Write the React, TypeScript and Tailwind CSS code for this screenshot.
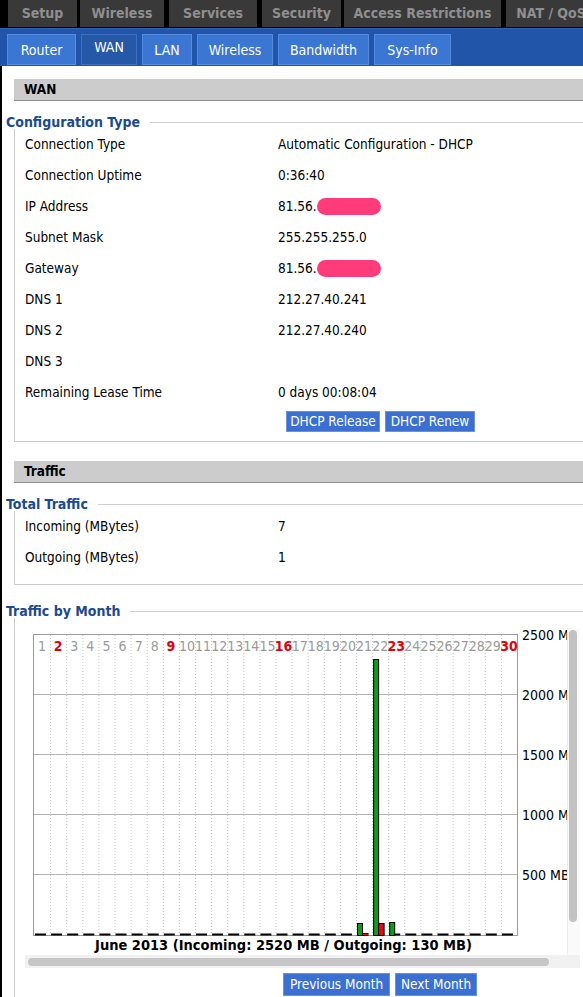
import React from "react";

const F = "font-['DejaVu_Sans_Condensed','DejaVu_Sans','Liberation_Sans',sans-serif]";
const FF = "'DejaVu Sans Condensed','DejaVu Sans','Liberation Sans',sans-serif";

const topTabs: { label: string; w: string; ml: string }[] = [
  { label: "Setup", w: "w-[69px]", ml: "ml-[8px]" },
  { label: "Wireless", w: "w-[84px]", ml: "ml-[3px]" },
  { label: "Services", w: "w-[88px]", ml: "ml-[5px]" },
  { label: "Security", w: "w-[79px]", ml: "ml-[5px]" },
  { label: "Access Restrictions", w: "w-[157px]", ml: "ml-[3px]" },
  { label: "NAT / QoS", w: "w-[90px]", ml: "ml-[5px]" },
];

const subTabs: { label: string; w: string; active?: boolean }[] = [
  { label: "Router", w: "w-[69px]" },
  { label: "WAN", w: "w-[56px]", active: true },
  { label: "LAN", w: "w-[50px]" },
  { label: "Wireless", w: "w-[76px]" },
  { label: "Bandwidth", w: "w-[91px]" },
  { label: "Sys-Info", w: "w-[77px]" },
];

function SectionBar({ title }: { title: string }) {
  return (
    <div className="ml-[12px] h-[22px] bg-[#cccccc] border-b border-[#8f8f8f] flex items-center pl-[10px]">
      <span className="text-[13.5px] font-bold text-[#000]">{title}</span>
    </div>
  );
}

function Legend({ title }: { title: string }) {
  return (
    <div className="flex items-center h-[14px]">
      <span className="ml-[4px] text-[14px] font-bold text-[#1b4a8f] leading-none whitespace-nowrap">{title}</span>
      <div className="flex-1 h-px bg-[#cfcfcf] ml-[10px]" />
    </div>
  );
}

function Blob() {
  return <span className="inline-block align-middle w-[64px] h-[17px] rounded-full bg-[#ff3b7c] -mt-[2px]" />;
}

function Row({ label, value }: { label: string; value: React.ReactNode }) {
  return (
    <div className="flex items-center h-[31px] text-[13.5px] text-[#000]">
      <div className="w-[253px] shrink-0">{label}</div>
      <div className="whitespace-nowrap">{value}</div>
    </div>
  );
}

function Btn({ label, w }: { label: string; w: string }) {
  return (
    <div className={`${w} h-full bg-[#3b6fd1] border border-[#6b93dc] text-white text-[13.5px] flex items-center justify-center whitespace-nowrap`}>
      {label}
    </div>
  );
}

const COL = 16.1;
const red = new Set([2, 9, 16, 23, 30]);
const bars: Record<number, [number, number]> = {
  21: [12, 2],
  22: [276, 12],
  23: [13, 0],
};

function Chart() {
  const days = Array.from({ length: 30 }, (_, i) => i + 1);
  const top = 6;
  const bottom = 307;
  return (
    <svg width={560} height={309} className="block ml-[8px]" style={{ overflow: "visible" }}>
      <rect x={0.5} y={top + 0.5} width={484} height={301} fill="#fff" stroke="#9a9a9a" />
      {days.slice(0, 29).map((d) => (
        <line
          key={"v" + d}
          x1={1 + d * COL + 0.5}
          x2={1 + d * COL + 0.5}
          y1={top + 1}
          y2={bottom}
          stroke="#c4c4c4"
          strokeDasharray="1,2"
        />
      ))}
      {[1, 2, 3, 4].map((k) => (
        <line key={"h" + k} x1={1} x2={484} y1={top + 60 * k + 0.5} y2={top + 60 * k + 0.5} stroke="#b3b3b3" />
      ))}
      {days.map((d) => {
        const x = 1 + (d - 1) * COL;
        const isRed = red.has(d);
        return (
          <text
            key={"t" + d}
            x={x + COL / 2}
            y={23}
            textAnchor="middle"
            fontSize={14}
            fontFamily={FF}
            fontWeight={isRed ? 700 : 400}
            fill={isRed ? "#e0000f" : "#9a9a9a"}
          >
            {d}
          </text>
        );
      })}
      {days.map((d) => {
        const x = 1 + (d - 1) * COL;
        const b = bars[d] || [0, 0];
        return (
          <g key={"b" + d}>
            <rect x={x + 1} y={bottom - 1.5} width={11} height={2} fill="#000" />
            {b[0] > 0 && (
              <rect x={x + 1.5} y={bottom - b[0] + 0.5} width={5} height={b[0]} fill="#119a1d" stroke="#000" />
            )}
            {b[1] > 0 && (
              <rect x={x + 6.5} y={bottom - b[1] + 0.5} width={5.5} height={b[1]} fill="#e01010" stroke="#000" />
            )}
          </g>
        );
      })}
      {["2500 MB", "2000 MB", "1500 MB", "1000 MB", "500 MB"].map((l, k) => (
        <text key={l} x={489} y={top + 60 * k + 6} fontSize={14} fontFamily={FF} fill="#000">
          {l}
        </text>
      ))}
    </svg>
  );
}

export default function App() {
  return (
    <div className={`w-[583px] h-[997px] bg-black overflow-hidden ${F}`}>
      {/* top tabs */}
      <div className="flex h-[27px] overflow-hidden">
        {topTabs.map((t) => (
          <div
            key={t.label}
            className={`${t.w} ${t.ml} shrink-0 h-full bg-[#393939] text-[#8f8f8f] font-bold text-[14px] flex items-center justify-center whitespace-nowrap`}
          >
            {t.label}
          </div>
        ))}
      </div>
      <div className="h-[1px] bg-black" />
      {/* sub tabs */}
      <div className="h-[38px] bg-[#2155aa] border-t border-[#2d63b8] flex items-end pl-[7px] gap-[5px]">
        {subTabs.map((t) => (
          <div
            key={t.label}
            className={`${t.w} h-[31px] mb-[1px] shrink-0 flex items-center justify-center text-[14px] text-white border ${
              t.active ? "bg-[#2658a8] border-[#3e6fc0] pb-[5px]" : "bg-[#3a76d2] border-[#558be0] pt-[2px]"
            }`}
          >
            {t.label}
          </div>
        ))}
      </div>
      {/* content */}
      <div className="ml-[2px] bg-white h-[932px] flex flex-col">
        <div className="h-[13px]" />
        <SectionBar title="WAN" />
        <div className="h-[14px]" />
        <Legend title="Configuration Type" />
        <div className="ml-[12px] border-l border-b border-[#cccccc] pl-[10px] pb-[9px]">
          <Row label="Connection Type" value="Automatic Configuration - DHCP" />
          <Row label="Connection Uptime" value="0:36:40" />
          <Row label="IP Address" value={<>81.56.<Blob /></>} />
          <Row label="Subnet Mask" value="255.255.255.0" />
          <Row label="Gateway" value={<>81.56.<Blob /></>} />
          <Row label="DNS 1" value="212.27.40.241" />
          <Row label="DNS 2" value="212.27.40.240" />
          <Row label="DNS 3" value="" />
          <Row label="Remaining Lease Time" value="0 days 00:08:04" />
          <div className="flex h-[21px] mt-[3px] ml-[261px] gap-[5px]">
            <Btn label="DHCP Release" w="w-[94px]" />
            <Btn label="DHCP Renew" w="w-[90px]" />
          </div>
        </div>
        <div className="h-[19px]" />
        <SectionBar title="Traffic" />
        <div className="h-[14px]" />
        <Legend title="Total Traffic" />
        <div className="ml-[12px] border-l border-b border-[#cccccc] pl-[10px] pb-[11px]">
          <Row label="Incoming (MBytes)" value="7" />
          <Row label="Outgoing (MBytes)" value="1" />
        </div>
        <div className="h-[19px]" />
        <Legend title="Traffic by Month" />
        <div className="ml-[12px] border-l border-[#cccccc] pl-[10px] flex-1">
          <div className="h-[10px]" />
          <div className="w-[555px] flex flex-col">
            <div className="flex">
              <div className="w-[542px] overflow-hidden">
                <Chart />
                <div className="ml-[8px] w-[501px] h-[18px] flex items-center justify-center text-[14.5px] font-bold text-[#000] whitespace-nowrap">
                  June 2013 (Incoming: 2520 MB / Outgoing: 130 MB)
                </div>
              </div>
              <div className="w-[13px] border-l border-[#ececec] bg-[#fafafa]">
                <div className="ml-[1px] mt-[2px] w-[8px] h-[292px] rounded-full bg-[#c2c2c2]" />
              </div>
            </div>
            <div className="h-[13px] bg-[#f1f1f1] flex items-center pl-[3px]">
              <div className="w-[521px] h-[8px] rounded-full bg-[#c6c6c6]" />
            </div>
          </div>
          <div className="flex h-[23px] mt-[5px] ml-[258px] gap-[5px]">
            <Btn label="Previous Month" w="w-[107px]" />
            <Btn label="Next Month" w="w-[82px]" />
          </div>
        </div>
      </div>
    </div>
  );
}
